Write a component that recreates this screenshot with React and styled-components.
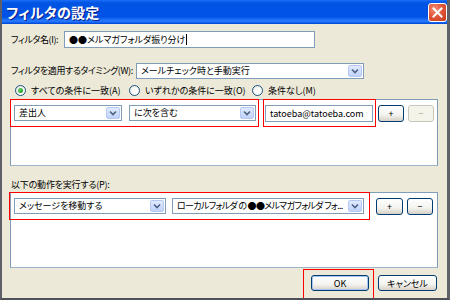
import styled, { createGlobalStyle } from 'styled-components'

const Global = createGlobalStyle`
  html, body {
    margin: 0;
    padding: 0;
    background: #fff;
  }
  body {
    font-family: "Noto Sans CJK JP", "Noto Sans", sans-serif;
    font-size: 9px;
    font-feature-settings: "palt";
    color: #000;
  }
`

const Window = styled.div`
  width: 450px;
  height: 300px;
  box-sizing: border-box;
  background: #ece9d8;
  border-left: 2px solid #5f6168;
  border-right: 3px solid #5f6168;
  border-bottom: 2px solid #4e5056;
  display: flex;
  flex-direction: column;
  overflow: hidden;
`

const TitleBar = styled.div`
  height: 24px;
  flex: none;
  margin: 0 -3px 0 -2px;
  display: flex;
  align-items: center;
  justify-content: space-between;
  padding: 0 3px 0 6px;
  background: linear-gradient(#1c6ef8 0%, #0054e3 12%, #0052e6 70%, #2c7dff 88%, #0a56e8 96%, #0046c8 100%);
`

const Title = styled.span`
  color: #fff;
  font-weight: bold;
  font-size: 14px;
  letter-spacing: 0.3px;
  text-shadow: 1px 1px 0 #0a1e8c;
`

const CloseButton = styled.div`
  width: 17px;
  height: 17px;
  border: 1px solid #fff;
  border-radius: 3px;
  background: radial-gradient(circle at 35% 30%, #f2917a 0%, #e2573a 45%, #c7391b 100%);
  display: flex;
  align-items: center;
  justify-content: center;
`

const Body = styled.div`
  flex: 1;
  display: flex;
  flex-direction: column;
  padding: 0 9px 0 8px;
`

const FieldRow = styled.div`
  display: flex;
  align-items: center;
  margin-top: ${p => p.$top}px;
  height: ${p => p.$h || 17}px;
`

const Label = styled.label`
  width: ${p => p.$w}px;
  flex: none;
  padding-left: 1px;
  box-sizing: border-box;
  white-space: nowrap;
  line-height: 12px;
  letter-spacing: -0.4px;
`

const TextInput = styled.div`
  width: ${p => p.$w}px;
  height: ${p => p.$h || 17}px;
  box-sizing: border-box;
  border: 1px solid #7f9db9;
  background: #fff;
  padding-left: 4px;
  display: flex;
  align-items: center;
  white-space: nowrap;
  overflow: hidden;
`

const Caret = styled.span`
  width: 1px;
  height: 11px;
  background: #000;
  margin-left: 1px;
`

const SelectBox = styled.div`
  width: ${p => p.$w}px;
  height: 16px;
  flex: none;
  box-sizing: border-box;
  border: 1px solid #7f9db9;
  background: #fff;
  display: flex;
  align-items: center;
  padding: 1px;
`

const SelectText = styled.span`
  flex: 1;
  padding-left: 3px;
  white-space: pre;
  overflow: hidden;
  line-height: 12px;
  letter-spacing: ${p => (p.$tight ? '-0.7px' : 'normal')};
`

const ArrowBox = styled.span`
  width: 14px;
  height: 12px;
  flex: none;
  border-radius: 2px;
  border: 1px solid #b6c8f5;
  box-sizing: border-box;
  background: linear-gradient(#e0e9fd, #c1d3fb);
  display: flex;
  align-items: center;
  justify-content: center;
`

const RadioRow = styled.div`
  display: flex;
  align-items: center;
  height: 12px;
  margin-top: 5px;
  padding-left: 5px;
`

const RadioItem = styled.span`
  display: flex;
  align-items: center;
  gap: 5px;
  width: ${p => (p.$w ? `${p.$w}px` : 'auto')};
  flex: none;
  white-space: nowrap;
`

const RadioCircle = styled.span`
  width: 11px;
  height: 11px;
  flex: none;
  box-sizing: border-box;
  border-radius: 50%;
  border: 1px solid #1c5180;
  background: radial-gradient(circle at 60% 60%, #fff 30%, #dcdcd5 100%);
  display: flex;
  align-items: center;
  justify-content: center;
  &::after {
    content: '';
    display: ${p => (p.$on ? 'block' : 'none')};
    width: 5px;
    height: 5px;
    border-radius: 50%;
    background: radial-gradient(circle at 35% 35%, #5ed45e, #1a8a1a);
  }
`

const Panel = styled.div`
  height: ${p => p.$h}px;
  margin-top: ${p => p.$top}px;
  box-sizing: border-box;
  background: #fff;
  border: 1px solid #7f9db9;
  border-bottom-color: #9db3c7;
`

const PanelRow = styled.div`
  display: flex;
  align-items: center;
  margin: -1px 0 0 ${p => p.$left}px;
`

const Highlight = styled.div`
  display: flex;
  align-items: center;
  gap: ${p => p.$gap || 0}px;
  width: ${p => p.$w}px;
  height: ${p => p.$h}px;
  flex: none;
  box-sizing: border-box;
  border: 1px solid #ff0000;
  padding-left: ${p => p.$pl}px;
  margin-left: ${p => p.$ml || 0}px;
`

const Button = styled.div`
  width: ${p => p.$w}px;
  height: ${p => p.$h || 17}px;
  flex: none;
  box-sizing: border-box;
  margin-left: ${p => p.$ml || 0}px;
  margin-top: ${p => p.$mt || 0}px;
  border: 1px solid ${p => (p.$disabled ? '#c9c7ba' : '#003c74')};
  border-radius: 3px;
  background: ${p =>
    p.$disabled ? '#f5f4ea' : 'linear-gradient(#ffffff 0%, #f3f3ef 60%, #d6d0c5 100%)'};
  box-shadow: ${p => (p.$default ? 'inset 0 0 0 1px #a9c3f0' : 'none')};
  color: ${p => (p.$disabled ? '#aca899' : '#000')};
  display: flex;
  align-items: center;
  justify-content: center;
  font-size: 9px;
  line-height: 11px;
`

const SectionLabel = styled.div`
  margin-top: 12px;
  height: 14px;
  line-height: 14px;
  padding-left: 1px;
  letter-spacing: -0.2px;
`

const Footer = styled.div`
  display: flex;
  justify-content: flex-end;
  align-items: flex-start;
  margin-top: 1px;
  padding-right: 1px;
`

const OkFrame = styled.div`
  border: 1px solid #ff0000;
  padding: 5px 4px 8px 7px;
`

const Arrow = () => (
  <ArrowBox>
    <svg width="8" height="6" viewBox="0 0 8 6">
      <path d="M1 1.5 L4 4.5 L7 1.5" fill="none" stroke="#4d6185" strokeWidth="1.6" />
    </svg>
  </ArrowBox>
)

const Select = ({ w, tight, children }) => (
  <SelectBox $w={w}>
    <SelectText $tight={tight}>{children}</SelectText>
    <Arrow />
  </SelectBox>
)

const Radio = ({ on, w, children }) => (
  <RadioItem $w={w}>
    <RadioCircle $on={on} />
    {children}
  </RadioItem>
)

export default function App() {
  return (
    <>
      <Global />
      <Window>
        <TitleBar>
          <Title>フィルタの設定</Title>
          <CloseButton>
            <svg width="11" height="11" viewBox="0 0 11 11">
              <path d="M1.5 1.5 L9.5 9.5 M9.5 1.5 L1.5 9.5" stroke="#fff" strokeWidth="2" strokeLinecap="square" />
            </svg>
          </CloseButton>
        </TitleBar>
        <Body>
          <FieldRow $top={7}>
            <Label $w={54}>フィルタ名(I):</Label>
            <TextInput $w={251}>
              ●●メルマガフォルダ振り分け<Caret />
            </TextInput>
          </FieldRow>
          <FieldRow $top={15} $h={16}>
            <Label $w={126}>フィルタを適用するタイミング(W):</Label>
            <Select w={228}>メールチェック時と手動実行</Select>
          </FieldRow>
          <RadioRow>
            <Radio on w={114}>すべての条件に一致(A)</Radio>
            <Radio w={123}>いずれかの条件に一致(O)</Radio>
            <Radio>条件なし(M)</Radio>
          </RadioRow>
          <Panel $top={3} $h={67}>
            <PanelRow $left={-1}>
              <Highlight $w={249} $h={28} $pl={3} $gap={7}>
                <Select w={108}>差出人</Select>
                <Select w={127}>に次を含む</Select>
              </Highlight>
              <Highlight $w={113} $h={28} $pl={1} $ml={4}>
                <TextInput $w={108} $h={17}>tatoeba@tatoeba.com</TextInput>
              </Highlight>
              <Button $w={26} $ml={2}>+</Button>
              <Button $w={26} $ml={4} $disabled>−</Button>
            </PanelRow>
          </Panel>
          <SectionLabel>以下の動作を実行する(P):</SectionLabel>
          <Panel $top={0} $h={76}>
            <PanelRow $left={-2}>
              <Highlight $w={361} $h={28} $pl={4} $gap={6}>
                <Select w={152}>メッセージを移動する</Select>
                <Select w={192} tight>ローカルフォルダ の ●●メルマガフォルダ フォ...</Select>
              </Highlight>
              <Button $w={27} $ml={6}>+</Button>
              <Button $w={26} $ml={4}>−</Button>
            </PanelRow>
          </Panel>
          <Footer>
            <OkFrame>
              <Button $w={58} $h={16} $default>OK</Button>
            </OkFrame>
            <Button $w={59} $h={16} $ml={4} $mt={6}>キャンセル</Button>
          </Footer>
        </Body>
      </Window>
    </>
  )
}
